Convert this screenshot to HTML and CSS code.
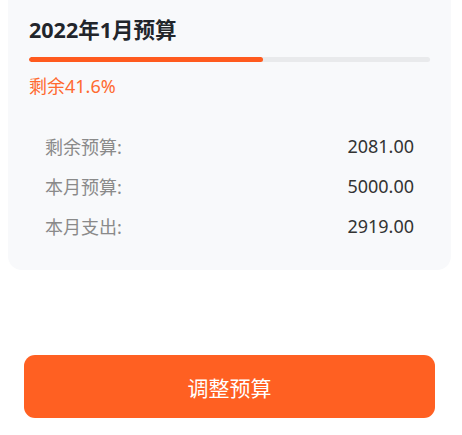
FILE: index.html
```html
<!DOCTYPE html>
<html lang="zh-CN">
<head>
    <meta charset="UTF-8">
    <meta name="viewport" content="width=device-width, initial-scale=1.0">
    <title>预算</title>
    <link rel="stylesheet" href="styles.css">
</head>
<body>
    <div class="budget-card">
        <h2 class="budget-title">2022年1月预算</h2>
        <div class="progress">
            <div class="progress-fill" style="width: 58.4%"></div>
        </div>
        <p class="remain">剩余41.6%</p>
        <ul class="stats">
            <li><span class="label">剩余预算:</span><span class="value">2081.00</span></li>
            <li><span class="label">本月预算:</span><span class="value">5000.00</span></li>
            <li><span class="label">本月支出:</span><span class="value">2919.00</span></li>
        </ul>
    </div>

    <div class="actions">
        <button class="adjust-btn">调整预算</button>
    </div>
</body>
</html>
```

FILE: styles.css
```css
/* Global Styles */
body {
    margin: 0;
    padding: 0;
    background-color: #fff;
    font-family: "Noto Sans", "Noto Sans CJK SC", sans-serif;
}

ul {
    list-style-type: none;
    margin: 0;
    padding: 0;
}

/* Budget Card */
.budget-card {
    margin: 0 11px 0 8px;
    padding: 15px 21px 24px;
    background-color: #f8f9fb;
    border-radius: 0 0 14px 14px;
}

.budget-title {
    margin: 0;
    font-size: 21.5px;
    line-height: 30px;
    font-weight: bold;
    color: #22252b;
}

.progress {
    margin-top: 12px;
    height: 5px;
    background-color: #e9eaec;
    border-radius: 3px;
    overflow: hidden;
}

.progress-fill {
    height: 100%;
    background-color: #ff5a1e;
    border-radius: 3px;
}

.remain {
    margin: 11px 0 0;
    font-size: 18px;
    line-height: 26px;
    color: #ff6a30;
}

.stats {
    margin-top: 27px;
    padding: 0 16px;
}

.stats li {
    display: flex;
    justify-content: space-between;
    align-items: center;
    height: 40px;
    font-size: 18px;
}

.stats .label {
    color: #8a8a8a;
}

.stats .value {
    color: #333;
}

/* Button */
.actions {
    padding: 85px 27px 0 24px;
}

.adjust-btn {
    display: block;
    width: 100%;
    height: 63px;
    border: none;
    border-radius: 11px;
    background-color: #ff6022;
    color: #fff;
    font-family: "Noto Sans", "Noto Sans CJK SC", sans-serif;
    font-size: 21px;
    cursor: pointer;
}
```
